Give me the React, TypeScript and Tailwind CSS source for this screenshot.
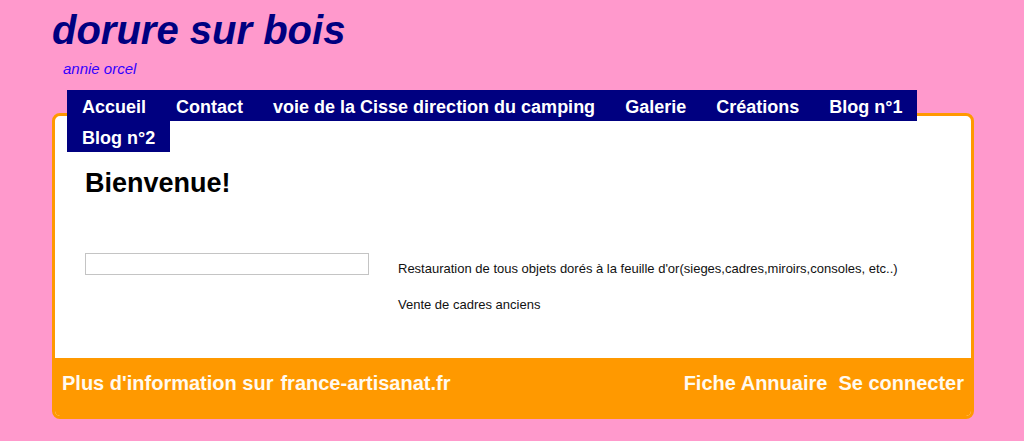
import React from "react";

const navItems = [
    "Accueil",
    "Contact",
    "voie de la Cisse direction du camping",
    "Galerie",
    "Créations",
    "Blog n°1",
    "Blog n°2",
];

const App: React.FC = () => {
    return (
        <div className="min-h-[441px] bg-[#ff99cc] font-['Liberation_Sans',Arial,sans-serif]">
            <div className="ml-[52px] w-[922px] pt-[7px] pb-[22px]">
                <h1 className="text-[40px] leading-[46px] font-bold italic text-[#000080]">
                    dorure sur bois
                </h1>
                <p className="mt-[7px] ml-[11px] text-[15px] leading-[17px] italic text-[#3300ff]">
                    annie orcel
                </p>

                <nav className="relative z-10 mt-[13px] ml-[15px] w-[892px] flex flex-wrap">
                    {navItems.map((item) => (
                        <a
                            key={item}
                            href="#"
                            className="block bg-[#000080] px-[15px] pt-[7px] pb-[3px] text-[18px] leading-[21px] font-bold text-white"
                        >
                            {item}
                        </a>
                    ))}
                </nav>

                <div className="-mt-[39px] rounded-[8px] border-[3px] border-[#ff9900] bg-white overflow-hidden">
                    <div className="h-[242px] px-[30px] pt-[52px]">
                        <h2 className="text-[27px] leading-[31px] font-bold text-black">Bienvenue!</h2>
                        <div className="mt-[54px] flex gap-[29px]">
                            <div className="w-[284px] h-[22px] border border-[#c4c4c4] bg-white"></div>
                            <div className="pt-[8px] text-[13px] leading-[15px] text-[#111]">
                                <p>Restauration de tous objets dorés à la feuille d'or(sieges,cadres,miroirs,consoles, etc..)</p>
                                <p className="mt-[21px]">Vente de cadres anciens</p>
                            </div>
                        </div>
                    </div>
                    <footer className="h-[58px] bg-[#ff9900] px-[7px] pt-[14px] flex justify-between text-[20px] leading-[23px] font-bold text-[#fffaf0]">
                        <div className="flex gap-[7px]">
                            <span>Plus d'information sur</span>
                            <a href="#">france-artisanat.fr</a>
                        </div>
                        <div className="flex gap-[11px]">
                            <a href="#">Fiche Annuaire</a>
                            <a href="#">Se connecter</a>
                        </div>
                    </footer>
                </div>
            </div>
        </div>
    );
};

export default App;
